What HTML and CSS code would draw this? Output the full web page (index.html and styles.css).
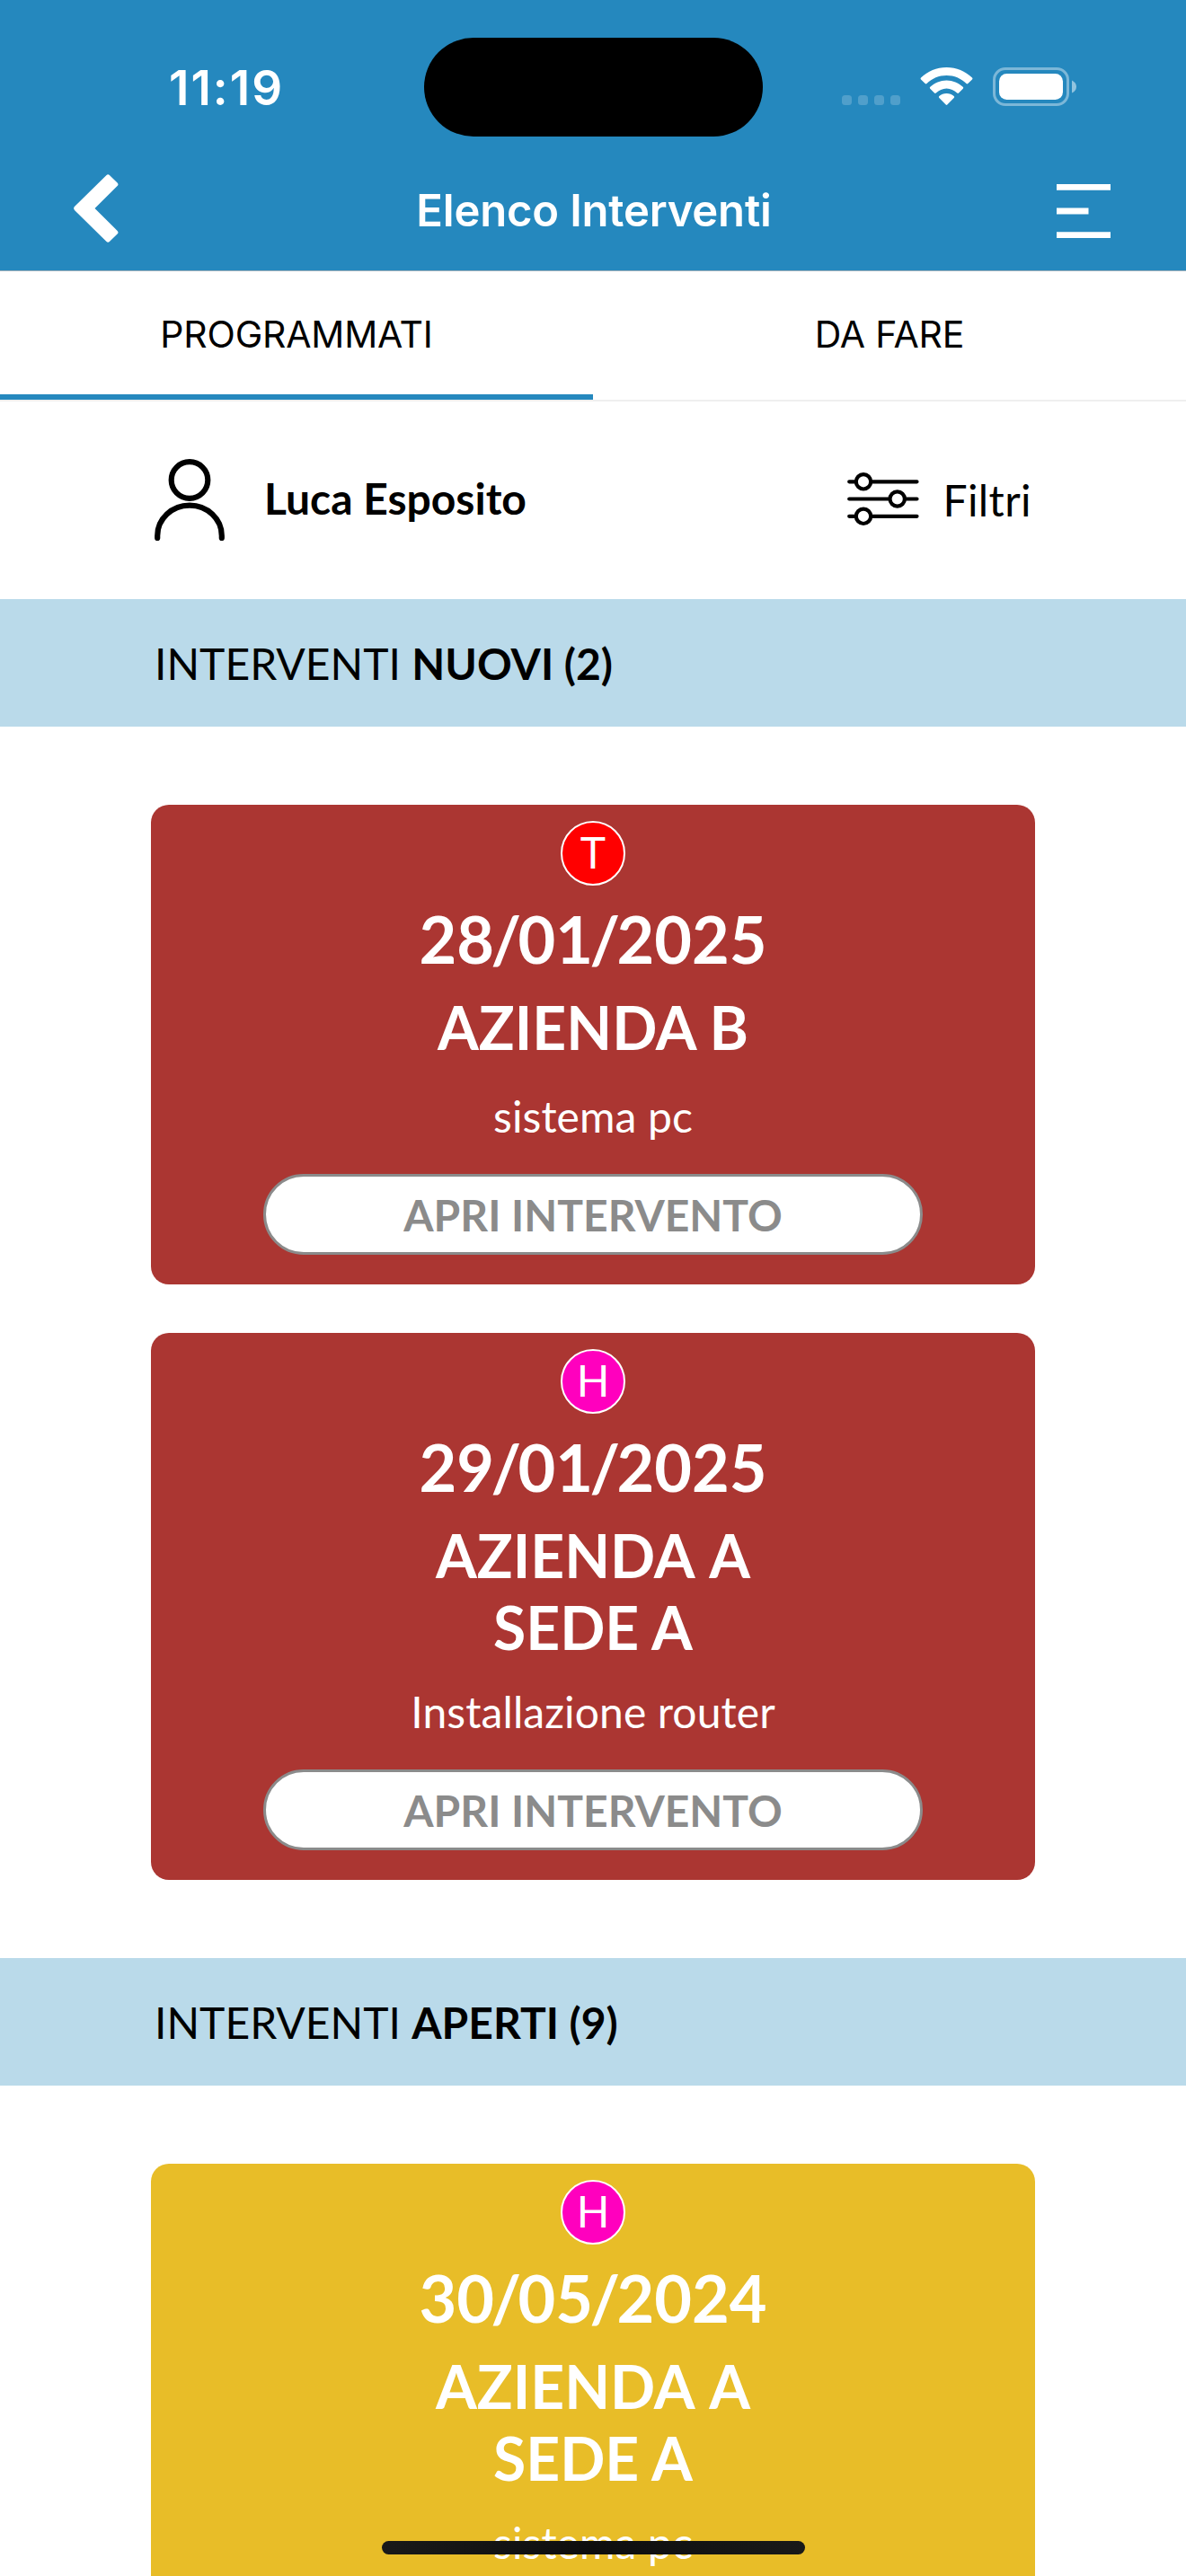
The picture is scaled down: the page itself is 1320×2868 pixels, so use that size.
FILE: index.html
```html
<!DOCTYPE html>
<html lang="it">
<head>
<meta charset="utf-8">
<title>Elenco Interventi</title>
<link rel="stylesheet" href="styles.css">
</head>
<body>
<div class="screen">
  <header class="header">
    <div class="status">
      <span class="status__time">11:19</span>
      <span class="status__island"></span>
      <svg class="status__icons" viewBox="0 0 262 44" width="262" height="44">
        <g fill="#fff" fill-opacity=".2">
          <rect x="0" y="31" width="11" height="11" rx="3.500"/>
          <rect x="18" y="31" width="11" height="11" rx="3.500"/>
          <rect x="36" y="31" width="11" height="11" rx="3.500"/>
          <rect x="54" y="31" width="11" height="11" rx="3.500"/>
        </g>
        <g fill="#fff">
          <path d="M116.500 0C127.500 0 137.500 4.300 145 11.500Q146 12.500 145 13.500L140.300 18Q139.500 18.800 138.500 18C132.700 12.300 125 9 116.500 9S100.300 12.300 94.500 18Q93.500 18.800 92.700 18L88 13.500Q87 12.500 88 11.500C95.500 4.300 105.500 0 116.500 0Z"/>
          <path d="M116.500 14.500C123.500 14.500 129.800 17.400 134.700 21.800Q135.800 22.800 134.800 23.800L130 28.500Q129.200 29.300 128.200 28.500C125 25.500 121 23.400 116.500 23.400S108 25.500 104.800 28.500Q103.800 29.300 103 28.500L98.200 23.800Q97.200 22.800 98.300 21.800C103.200 17.400 109.500 14.500 116.500 14.500Z"/>
          <path d="M116.500 29C119.700 29 122.500 30.100 124.700 32Q125.700 33 124.700 34L117.300 41.500Q116.500 42.300 115.700 41.500L108.300 34Q107.300 33 108.300 32C110.500 30.100 113.300 29 116.500 29Z"/>
          <rect x="175" y="7" width="71" height="29" rx="8.500"/>
          <path fill-opacity=".5" d="M256 14.500Q261 17 261 21.500T256 28.500Z"/>
        </g>
        <rect x="169.500" y="1.500" width="82" height="40" rx="12.500" fill="none" stroke="#fff" stroke-opacity=".4" stroke-width="3"/>
      </svg>
    </div>
    <nav class="navbar">
      <svg class="navbar__back" viewBox="0 0 50 76" width="50" height="76">
        <path fill="#fff" d="M36.300 1.200Q38.200-.6 40.100 1.200L48.600 9.500Q50.400 11.300 48.600 13.100L23.500 38L48.600 62.900Q50.400 64.700 48.600 66.500L40.100 74.800Q38.200 76.600 36.300 74.800L1.200 40.200Q-1 38 1.200 35.800Z"/>
      </svg>
      <h1 class="navbar__title">Elenco Interventi</h1>
      <svg class="navbar__menu" viewBox="0 0 60 60" width="60" height="60">
        <path fill="#fff" d="M0 0H60V6.700H0ZM0 26.500H35.500V33.500H0ZM0 53.300H60V60H0Z"/>
      </svg>
    </nav>
  </header>

  <div class="tabs">
    <div class="tab tab--active">PROGRAMMATI</div>
    <div class="tab">DA FARE</div>
  </div>

  <div class="toolbar">
    <div class="toolbar__user">
      <svg viewBox="0 0 78 92" width="78" height="92" fill="none" stroke="#000" stroke-width="6.200" stroke-linecap="round">
        <circle cx="39" cy="23.500" r="20.300"/>
        <path d="M3.200 88V85.500A35.800 33.800 0 0 1 74.800 85.500V88"/>
      </svg>
      <span class="toolbar__name">Luca Esposito</span>
    </div>
    <div class="toolbar__filter">
      <svg viewBox="0 0 80 60" width="80" height="60" fill="none" stroke="#000" stroke-width="4.200" stroke-linecap="round">
        <path d="M2.200 10.300H9M27 10.300H77.500M2.200 29.500H46.500M64.500 29.500H77.500M2.200 48.800H9M27 48.800H77.500"/>
        <circle cx="18" cy="10.300" r="8.200"/>
        <circle cx="55.700" cy="29.500" r="8.200"/>
        <circle cx="18" cy="48.800" r="8.200"/>
      </svg>
      <span class="toolbar__label">Filtri</span>
    </div>
  </div>

  <h2 class="section">INTERVENTI <b>NUOVI (2)</b></h2>
  <div class="jobs">
    <article class="job job--new">
      <span class="badge badge--red">T</span>
      <div class="job__date">28<span class="job__slash">/</span>01<span class="job__slash">/</span>2025</div>
      <div class="job__name">AZIENDA B</div>
      <div class="job__desc">sistema pc</div>
      <div class="job__button">APRI INTERVENTO</div>
    </article>
    <article class="job job--new">
      <span class="badge badge--pink">H</span>
      <div class="job__date">29<span class="job__slash">/</span>01<span class="job__slash">/</span>2025</div>
      <div class="job__name"><span class="job__company">AZIENDA A</span><br>SEDE A</div>
      <div class="job__desc">Installazione router</div>
      <div class="job__button">APRI INTERVENTO</div>
    </article>
  </div>

  <h2 class="section">INTERVENTI <b>APERTI (9)</b></h2>
  <div class="jobs">
    <article class="job job--open">
      <span class="badge badge--pink">H</span>
      <div class="job__date">30<span class="job__slash">/</span>05<span class="job__slash">/</span>2024</div>
      <div class="job__name"><span class="job__company">AZIENDA A</span><br>SEDE A</div>
      <div class="job__desc">sistema pc</div>
    </article>
  </div>

  <div class="home-indicator"></div>
</div>
</body>
</html>
```
FILE: styles.css
```css
* {
  box-sizing: border-box;
}

body {
  margin: 0;
  background: #fff;
  color: #000;
  font-family: Lato, sans-serif;
  font-size: 48px;
}

svg {
  display: block;
  flex: none;
}

.screen {
  position: relative;
  width: 1320px;
  height: 2868px;
  overflow: hidden;
}

/* Header */
.header {
  height: 302px;
  background: #2588be;
  border-bottom: 1px solid #9fb0ba;
  color: #fff;
  font-family: Inter, sans-serif;
  font-weight: 600;
}

.status {
  display: grid;
  grid-template-columns: 472px 377px 1fr;
  height: 153px;
  padding-top: 42px;
}

.status__time {
  padding-left: 188px;
  font-size: 53px;
  line-height: 113px;
  letter-spacing: 2px;
}

.status__island {
  height: 110px;
  border-radius: 55px;
  background: #000;
}

.status__icons {
  margin: 33px 0 0 88px;
}

.navbar {
  display: grid;
  grid-template-columns: 50px 1fr 60px;
  align-items: start;
  padding: 41px 84px 0 82px;
}

.navbar__title {
  margin: 9px 0 0;
  padding-left: 14px;
  font-size: 49px;
  font-weight: 600;
  line-height: 64px;
  text-align: center;
  letter-spacing: -0.2px;
}

.navbar__menu {
  margin-top: 11px;
}

/* Tabs */
.tabs {
  display: grid;
  grid-template-columns: 1fr 1fr;
  height: 145px;
  border-bottom: 2px solid #efefef;
}

.tab {
  height: 143px;
  padding-top: 43px;
  text-align: center;
  font-family: Inter, sans-serif;
  font-size: 41px;
  line-height: 54px;
  letter-spacing: -0.2px;
}

.tab--active {
  border-bottom: 6px solid #2588be;
}

/* User and filter row */
.toolbar {
  display: flex;
  justify-content: space-between;
  height: 220px;
  padding: 64px 172px 0;
}

.toolbar__user,
.toolbar__filter {
  display: flex;
  align-items: flex-start;
}

.toolbar__name {
  margin: 15px 0 0 44px;
  font-weight: 700;
  line-height: 58px;
}

.toolbar__filter svg {
  margin-top: 15px;
}

.toolbar__label {
  margin: 17px 0 0 27px;
  line-height: 58px;
  letter-spacing: 0.4px;
}

/* Section headings */
.section {
  height: 142px;
  margin: 0;
  padding: 43px 0 0 172px;
  background: #badaea;
  font-size: 48px;
  font-weight: 400;
  line-height: 58px;
}

.section b {
  font-weight: 700;
}

/* Job cards */
.jobs {
  display: flex;
  flex-direction: column;
  gap: 54px;
  padding: 87px 168px;
}

.job {
  display: flex;
  flex-direction: column;
  align-items: center;
  padding: 18px 0 33px;
  border-radius: 20px;
  color: #fff;
  text-align: center;
}

.job--new {
  background: #ab3632;
}

.job--open {
  background: #e8bd28;
}

.badge {
  width: 72px;
  height: 72px;
  border: 2px solid #fff;
  border-radius: 50%;
  line-height: 66px;
}

.badge--red {
  background: #f00;
}

.badge--pink {
  background: #ff00be;
}

.job__date {
  margin-top: 16px;
  font-size: 72px;
  font-weight: 700;
  line-height: 86px;
}

.job__slash {
  margin: 0 -3.5px;
}

.job__name {
  min-height: 85px;
  margin-top: 16px;
  font-size: 66px;
  font-weight: 700;
  line-height: 80px;
}

.job__company {
  word-spacing: 4px;
}

.job__desc {
  margin-top: 25px;
  line-height: 58px;
  letter-spacing: 0.1px;
}

.job__button {
  width: 734px;
  height: 90px;
  margin-top: 35px;
  border: 3px solid #8b8b8b;
  border-radius: 45px;
  background: #fff;
  color: #8b8b8b;
  font-weight: 700;
  line-height: 86px;
}

.home-indicator {
  position: absolute;
  left: 425px;
  bottom: 24px;
  width: 471px;
  height: 15px;
  border-radius: 8px;
  background: linear-gradient(90deg, #191919, #0e0e0e 50%, #191919);
}
```
